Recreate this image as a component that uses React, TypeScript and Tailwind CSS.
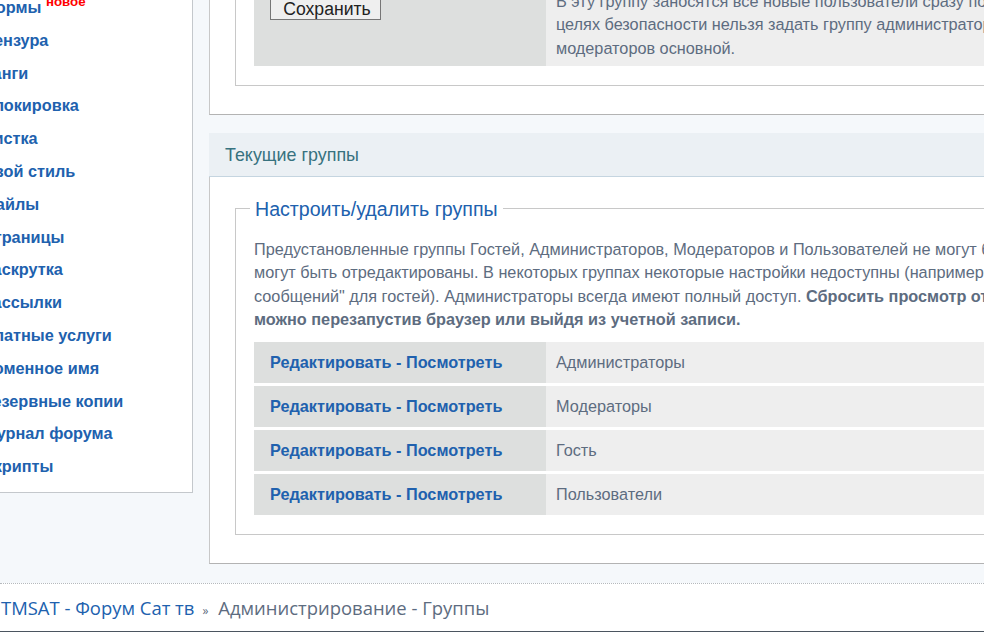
const menu = [
  "Цензура",
  "Ранги",
  "Блокировка",
  "Чистка",
  "Свой стиль",
  "Файлы",
  "Страницы",
  "Раскрутка",
  "Рассылки",
  "Платные услуги",
  "Доменное имя",
  "Резервные копии",
  "Журнал форума",
  "Скрипты",
];

const groups = ["Администраторы", "Модераторы", "Гость", "Пользователи"];

function Sidebar() {
  return (
    <aside className="ml-[-37px] w-[230px] shrink-0 border-r border-b border-[#c4c8cc] bg-white pb-[9px] pl-[19px] pt-[31px]">
      <ul className="text-[16.25px] font-bold leading-[32.8px] text-[#2061ae]">
        <li className="whitespace-nowrap">
          Формы <sup className="text-[13.3px] leading-none text-[#ff0000]">новое</sup>
        </li>
        {menu.map((item) => (
          <li key={item} className="whitespace-nowrap">
            {item}
          </li>
        ))}
      </ul>
    </aside>
  );
}

export default function App() {
  return (
    <div className="h-[632px] w-[984px] overflow-hidden bg-[#f5f8fb] font-['Liberation_Sans',Arial,sans-serif] text-[16.25px] text-[#5d6c80]">
      <div className="mt-[-40px] flex items-start gap-4">
        <Sidebar />
        <main className="w-[1000px] shrink-0">
          {/* panel cut off by the top of the window */}
          <section className="border-x border-b border-x-[#c8c8c8] border-b-[#b3b3b3] bg-white px-[25px] pb-[28px]">
            <div className="border-x border-b border-[#c8c8c8] px-[18px] pb-[19px]">
              <div className="flex h-[106px]">
                <div className="w-[292px] shrink-0 bg-[#dddfde] pl-4 pt-[38px]">
                  <button className="block h-[22px] w-[111px] border border-[#767676] bg-[#efefef] pl-[3px] text-[17.6px] leading-[18px] text-[#222]">
                    Сохранить
                  </button>
                </div>
                <div className="flex-1 whitespace-nowrap bg-[#eeeeee] pl-[10px] pt-[30px] leading-[23.3px]">
                  В эту группу заносятся все новые пользователи сразу после регистрации. В
                  <br />
                  целях безопасности нельзя задать группу администраторов или
                  <br />
                  модераторов основной.
                </div>
              </div>
            </div>
          </section>

          <h2 className="mt-[18px] h-[44px] border-b border-[#c5d5e0] bg-[#ebf0f4] pl-4 text-[17.9px] font-normal leading-[45px] text-[#37727f]">
            Текущие группы
          </h2>

          <section className="border-x border-b border-x-[#c8c8c8] border-b-[#b3b3b3] bg-white px-[25px] pb-[28px] pt-[18px]">
            <fieldset className="border border-[#c8c8c8] px-[18px] pb-[19px] pt-[17px]">
              <legend className="ml-[-4px] px-[5px] pt-[2px] text-[19.6px] leading-[24px] text-[#2061ae]">
                Настроить/удалить группы
              </legend>
              <p className="whitespace-nowrap leading-[23.3px]">
                Предустановленные группы Гостей, Администраторов, Модераторов и Пользователей не могут быть удалены, но
                <br />
                могут быть отредактированы. В некоторых группах некоторые настройки недоступны (например "редактирование
                <br />
                сообщений" для гостей). Администраторы всегда имеют полный доступ.{" "}
                <b>Сбросить просмотр от имени группы</b>
                <br />
                <b>можно перезапустив браузер или выйдя из учетной записи.</b>
              </p>
              <div className="mt-[11px] flex flex-col gap-[3px]">
                {groups.map((name) => (
                  <div key={name} className="flex h-[41px] items-center bg-[#eeeeee]">
                    <div className="flex h-full w-[292px] shrink-0 items-center bg-[#dddfde] pb-[2px] pl-4 font-bold text-[#2061ae]">
                      Редактировать - Посмотреть
                    </div>
                    <div className="pb-[2px] pl-[10px]">{name}</div>
                  </div>
                ))}
              </div>
            </fieldset>
          </section>
        </main>
      </div>

      <footer className="mt-[19px] h-[49px] border-t border-b border-dotted border-t-[#b5b9bd] border-b-[#4b5560] bg-white font-['Open_Sans',sans-serif] text-[18.45px] leading-[47px] whitespace-nowrap [border-bottom-style:solid]">
        <span className="ml-[1px] text-[#2061ae]">TMSAT - Форум Сат тв</span>
        <span className="ml-[8px] mr-[10px] text-[12px]">»</span>
        <span>Администрирование - Группы</span>
      </footer>
    </div>
  );
}
